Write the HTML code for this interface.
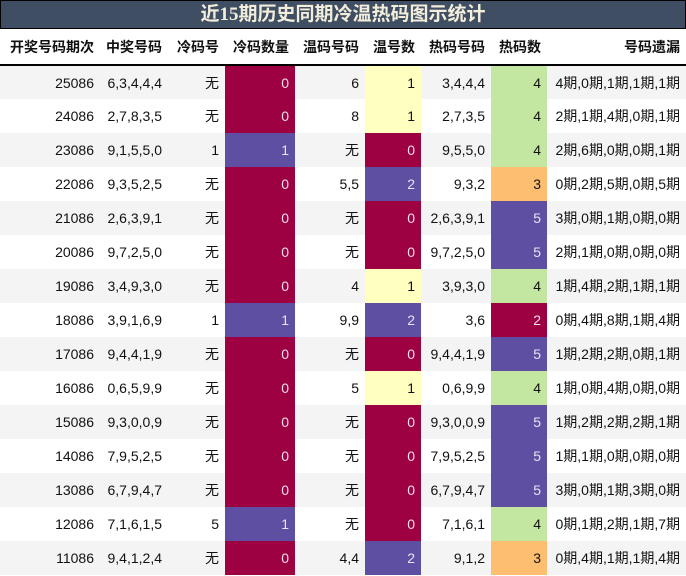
<!DOCTYPE html>
<html><head><meta charset="utf-8"><style>
*{margin:0;padding:0;box-sizing:border-box}
body{width:686px;height:576px;overflow:hidden;background:#fff;font-family:"Liberation Sans","Noto Sans CJK SC",sans-serif;font-size:14px;color:#111}
.t{height:29px;background:#3f4e62;border:1px solid #000;color:#f3eedc;font:bold 19px "Liberation Serif","Noto Sans CJK SC",serif;text-align:center;line-height:27px}
table{border-collapse:collapse;table-layout:fixed;width:686px}
th{height:36px;font-weight:bold;text-align:right;padding-right:6px;border-bottom:2px solid #000;white-space:nowrap}
td{height:34px;text-align:right;padding-right:6px;white-space:nowrap}
tr:nth-child(even) td{background:#f4f4f4}
tr:nth-child(odd) td{background:#fff}
td.r{background:#9e0142!important;color:#f0e0e8}
td.p{background:#5e4fa2!important;color:#e8e4f4}
td.y{background:#ffffbf!important}
td.g{background:#c3e6a1!important}
td.o{background:#fdbf6f!important}
</style></head><body>
<div class="t">近15期历史同期冷温热码图示统计</div>
<table>
<colgroup><col style="width:100px"><col style="width:68px"><col style="width:57px"><col style="width:70px"><col style="width:70px"><col style="width:56px"><col style="width:70px"><col style="width:56px"><col style="width:139px"></colgroup>
<tr><th>开奖号码期次</th><th>中奖号码</th><th>冷码号</th><th>冷码数量</th><th>温码号码</th><th>温号数</th><th>热码号码</th><th>热码数</th><th>号码遗漏</th></tr>
<tr><td>25086</td><td>6,3,4,4,4</td><td>无</td><td class="r">0</td><td>6</td><td class="y">1</td><td>3,4,4,4</td><td class="g">4</td><td>4期,0期,1期,1期,1期</td></tr>
<tr><td>24086</td><td>2,7,8,3,5</td><td>无</td><td class="r">0</td><td>8</td><td class="y">1</td><td>2,7,3,5</td><td class="g">4</td><td>2期,1期,4期,0期,1期</td></tr>
<tr><td>23086</td><td>9,1,5,5,0</td><td>1</td><td class="p">1</td><td>无</td><td class="r">0</td><td>9,5,5,0</td><td class="g">4</td><td>2期,6期,0期,0期,1期</td></tr>
<tr><td>22086</td><td>9,3,5,2,5</td><td>无</td><td class="r">0</td><td>5,5</td><td class="p">2</td><td>9,3,2</td><td class="o">3</td><td>0期,2期,5期,0期,5期</td></tr>
<tr><td>21086</td><td>2,6,3,9,1</td><td>无</td><td class="r">0</td><td>无</td><td class="r">0</td><td>2,6,3,9,1</td><td class="p">5</td><td>3期,0期,1期,0期,0期</td></tr>
<tr><td>20086</td><td>9,7,2,5,0</td><td>无</td><td class="r">0</td><td>无</td><td class="r">0</td><td>9,7,2,5,0</td><td class="p">5</td><td>2期,1期,0期,0期,0期</td></tr>
<tr><td>19086</td><td>3,4,9,3,0</td><td>无</td><td class="r">0</td><td>4</td><td class="y">1</td><td>3,9,3,0</td><td class="g">4</td><td>1期,4期,2期,1期,1期</td></tr>
<tr><td>18086</td><td>3,9,1,6,9</td><td>1</td><td class="p">1</td><td>9,9</td><td class="p">2</td><td>3,6</td><td class="r">2</td><td>0期,4期,8期,1期,4期</td></tr>
<tr><td>17086</td><td>9,4,4,1,9</td><td>无</td><td class="r">0</td><td>无</td><td class="r">0</td><td>9,4,4,1,9</td><td class="p">5</td><td>1期,2期,2期,0期,1期</td></tr>
<tr><td>16086</td><td>0,6,5,9,9</td><td>无</td><td class="r">0</td><td>5</td><td class="y">1</td><td>0,6,9,9</td><td class="g">4</td><td>1期,0期,4期,0期,0期</td></tr>
<tr><td>15086</td><td>9,3,0,0,9</td><td>无</td><td class="r">0</td><td>无</td><td class="r">0</td><td>9,3,0,0,9</td><td class="p">5</td><td>1期,2期,2期,2期,1期</td></tr>
<tr><td>14086</td><td>7,9,5,2,5</td><td>无</td><td class="r">0</td><td>无</td><td class="r">0</td><td>7,9,5,2,5</td><td class="p">5</td><td>1期,1期,0期,0期,0期</td></tr>
<tr><td>13086</td><td>6,7,9,4,7</td><td>无</td><td class="r">0</td><td>无</td><td class="r">0</td><td>6,7,9,4,7</td><td class="p">5</td><td>3期,0期,1期,3期,0期</td></tr>
<tr><td>12086</td><td>7,1,6,1,5</td><td>5</td><td class="p">1</td><td>无</td><td class="r">0</td><td>7,1,6,1</td><td class="g">4</td><td>0期,1期,2期,1期,7期</td></tr>
<tr><td>11086</td><td>9,4,1,2,4</td><td>无</td><td class="r">0</td><td>4,4</td><td class="p">2</td><td>9,1,2</td><td class="o">3</td><td>0期,4期,1期,1期,4期</td></tr>
</table>
</body></html>
